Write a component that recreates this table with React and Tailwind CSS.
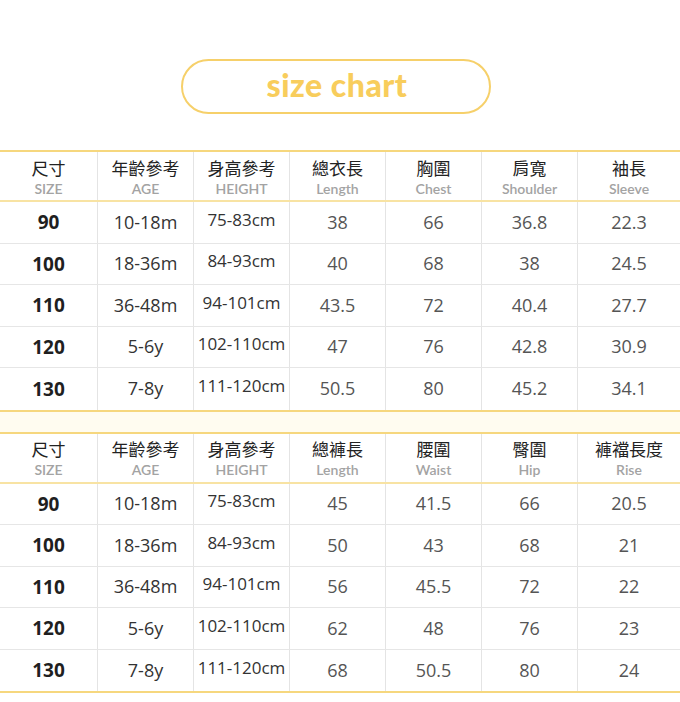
const tops = [
  { zh: "尺寸", en: "SIZE" },
  { zh: "年齡參考", en: "AGE" },
  { zh: "身高參考", en: "HEIGHT" },
  { zh: "總衣長", en: "Length" },
  { zh: "胸圍", en: "Chest" },
  { zh: "肩寬", en: "Shoulder" },
  { zh: "袖長", en: "Sleeve" },
];

const bottoms = [
  { zh: "尺寸", en: "SIZE" },
  { zh: "年齡參考", en: "AGE" },
  { zh: "身高參考", en: "HEIGHT" },
  { zh: "總褲長", en: "Length" },
  { zh: "腰圍", en: "Waist" },
  { zh: "臀圍", en: "Hip" },
  { zh: "褲襠長度", en: "Rise" },
];

const base = [
  ["90", "10-18m", "75-83cm"],
  ["100", "18-36m", "84-93cm"],
  ["110", "36-48m", "94-101cm"],
  ["120", "5-6y", "102-110cm"],
  ["130", "7-8y", "111-120cm"],
];

const topData = [
  ["38", "66", "36.8", "22.3"],
  ["40", "68", "38", "24.5"],
  ["43.5", "72", "40.4", "27.7"],
  ["47", "76", "42.8", "30.9"],
  ["50.5", "80", "45.2", "34.1"],
];

const bottomData = [
  ["45", "41.5", "66", "20.5"],
  ["50", "43", "68", "21"],
  ["56", "45.5", "72", "22"],
  ["62", "48", "76", "23"],
  ["68", "50.5", "80", "24"],
];

const cols = "grid grid-cols-[97px_96px_96px_96px_96px_96px_1fr]";

function SizeTable({ headers, data }) {
  return (
    <div className="border-t-2 border-b-2 border-[#f6d77e]">
      <div className={`${cols} h-[50px] border-b-2 border-[#f8e3a3]`}>
        {headers.map((h, i) => (
          <div
            key={h.en}
            className={`flex flex-col items-center justify-center pt-[3px] ${
              i > 0 ? "border-l border-[#e4e4e4]" : ""
            }`}
          >
            <span className="text-[17px] leading-[20px] text-[#222] font-['Noto_Sans_CJK_TC',sans-serif]">
              {h.zh}
            </span>
            <span className="mt-[2px] text-[14px] leading-[18px] font-semibold text-[#a3a3a3] font-['Lato',sans-serif]">
              {h.en}
            </span>
          </div>
        ))}
      </div>
      {base.map((row, r) => (
        <div
          key={row[0]}
          className={`${cols} h-[41.5px] font-['Open_Sans',sans-serif] ${
            r < 4 ? "border-b border-[#e6e6e6]" : ""
          }`}
        >
          <div className="flex items-center justify-center text-[19px] font-bold text-[#1f1f1f]">
            {row[0]}
          </div>
          <div className="flex items-center justify-center border-l border-[#e4e4e4] text-[18px] text-[#333]">
            {row[1]}
          </div>
          <div className="flex items-center justify-center pb-[6px] border-l border-[#e4e4e4] text-[17px] text-[#333]">
            {row[2]}
          </div>
          {data[r].map((v, c) => (
            <div
              key={c}
              className="flex items-center justify-center border-l border-[#e4e4e4] text-[18px] text-[#555]"
            >
              {v}
            </div>
          ))}
        </div>
      ))}
    </div>
  );
}

export default function App() {
  return (
    <div className="w-[680px] h-[702px] bg-white overflow-hidden">
      <div className="pt-[59px] pl-[181px]">
        <div className="w-[310px] h-[55px] rounded-full border-[2.5px] border-[#f6d06a] flex items-center justify-center">
          <span className="text-[32px] font-black tracking-[0.5px] text-[#f8cd5c] font-['Lato',sans-serif] pb-[3px] pl-[2px]">
            size chart
          </span>
        </div>
      </div>
      <div className="mt-[36px]">
        <SizeTable headers={tops} data={topData} />
      </div>
      <div className="h-[20px] bg-[#fffcf0]" />
      <SizeTable headers={bottoms} data={bottomData} />
    </div>
  );
}
